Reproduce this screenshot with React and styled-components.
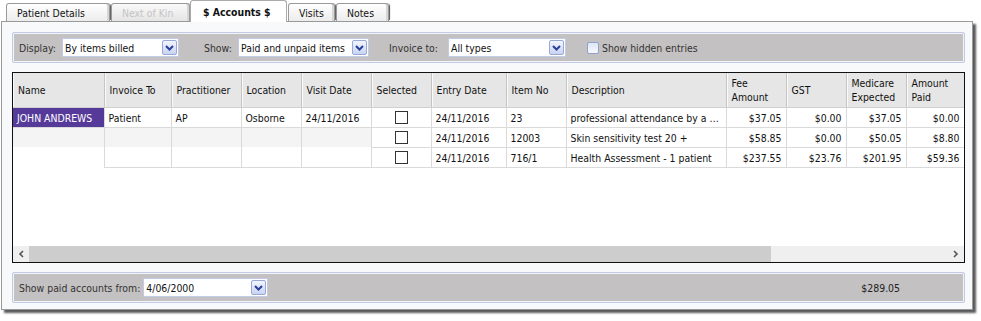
import React from 'react'
import styled, { createGlobalStyle, css } from 'styled-components'

const GlobalStyle = createGlobalStyle`
  html, body {
    margin: 0;
    padding: 0;
    background: #ffffff;
  }
  body {
    font-family: 'DejaVu Sans Condensed', 'DejaVu Sans', Tahoma, sans-serif;
    font-stretch: semi-condensed;
    font-size: 10.4px;
    color: #222;
  }
`

const Page = styled.div`
  width: 981px;
  height: 321px;
  padding: 0 0 0 1px;
  box-sizing: border-box;
`

const TabStrip = styled.div`
  display: flex;
  align-items: flex-end;
  height: 21px;
  padding-left: 5px;
  position: relative;
  z-index: 2;
`

const Tab = styled.div`
  width: ${p => p.$w}px;
  height: 18px;
  box-sizing: border-box;
  padding-left: 10px;
  display: flex;
  align-items: center;
  margin-right: ${p => p.$mr ?? 1}px;
  border: 1px solid #9a9a9a;
  border-bottom: none;
  border-radius: 3px 3px 0 0;
  background: linear-gradient(#ffffff, #ececec);
  box-shadow: inset -2px 0 0 #d6d6d6, 2px 0 1px -1px #555;
  color: #111;
  white-space: nowrap;
  ${p => p.$disabled && css`
    color: #c4c4c4;
    background: linear-gradient(#fafafa, #e4e4e4);
  `}
  ${p => p.$active && css`
    height: 22px;
    margin-bottom: -1px;
    background: #fff;
    font-weight: bold;
    padding-left: 12px;
    box-shadow: none;
    border-color: #aaa;
  `}
`

const Panel = styled.div`
  width: 972px;
  height: 289px;
  box-sizing: border-box;
  border: 1px solid #999;
  background: #f8f9fb;
  box-shadow: 3px 3px 2px rgba(0, 0, 0, 0.65);
  padding: 10px 7px 6px 10px;
  display: flex;
  flex-direction: column;
  gap: 9px;
`

const Bar = styled.div`
  height: 31px;
  box-sizing: border-box;
  border: 1px solid #c2cae6;
  border-radius: 2px;
  background: #c3c1c1;
  box-shadow: inset 0 0 0 1px #f3f4f8;
  display: flex;
  align-items: center;
  padding: 0 6px;
  color: #333;
  flex-shrink: 0;
`

const Label = styled.span`
  width: ${p => (p.$w ? `${p.$w}px` : 'auto')};
  margin-right: 3px;
  white-space: nowrap;
`

const SelectBox = styled.div`
  width: ${p => p.$w}px;
  height: 19px;
  box-sizing: border-box;
  border: 1px solid #c2cae6;
  background: #fff;
  display: flex;
  align-items: center;
  padding-left: 2px;
  margin-right: ${p => p.$mr}px;
  color: #111;
`

const SelectText = styled.span`
  flex: 1;
  white-space: nowrap;
`

const DropButton = styled.span`
  width: 15px;
  height: 15px;
  box-sizing: border-box;
  margin-right: 1px;
  border: 1px solid #98a8d8;
  border-radius: 2px;
  background: linear-gradient(#f2f5fd, #c8d4f2);
  display: flex;
  align-items: center;
  justify-content: center;
`

const HiddenCheck = styled.span`
  width: 12px;
  height: 12px;
  box-sizing: border-box;
  border: 1px solid #8ea2d0;
  border-radius: 2px;
  background: linear-gradient(#dfe6f6, #f6f8fd);
  margin-right: 3px;
`

const Grid = styled.div`
  flex: 1;
  border: 1px solid #111;
  background: #fff;
  display: flex;
  flex-direction: column;
  overflow: hidden;
`

const Table = styled.table`
  border-collapse: collapse;
  table-layout: fixed;
  width: 951px;
  color: #111;
`

const Th = styled.th`
  height: 34px;
  padding: 0 5px;
  text-align: left;
  font-weight: normal;
  line-height: 14px;
  background: #e6e6e6;
  border-right: 1px solid #c4c4c4;
  box-shadow: inset 1px 0 0 #fafafa;
  border-bottom: 1px solid #d0d0d0;
  white-space: normal;
`

const Td = styled.td`
  height: 19px;
  padding: 0 4px;
  border-right: 1px solid #dadada;
  border-bottom: 1px solid #dadada;
  white-space: nowrap;
  overflow: hidden;
  text-overflow: ellipsis;
  text-align: ${p => (p.$right ? 'right' : p.$center ? 'center' : 'left')};
  background: ${p => (p.$selected ? '#563a99' : p.$shade ? '#f4f4f4' : '#fff')};
  color: ${p => (p.$selected ? '#fff' : '#111')};
  ${p => p.$blank && css`border-bottom-color: transparent;`}
`

const Box = styled.span`
  display: inline-block;
  width: 13px;
  height: 13px;
  box-sizing: border-box;
  border: 1px solid #333;
  background: #fff;
  vertical-align: middle;
`

const Filler = styled.div`
  flex: 1;
`

const HScroll = styled.div`
  height: 16px;
  display: flex;
  align-items: center;
  background: #efefef;
`

const Arrow = styled.span`
  width: 16px;
  height: 16px;
  display: flex;
  align-items: center;
  justify-content: center;
`

const Thumb = styled.div`
  width: 742px;
  height: 16px;
  background: #cdcdcd;
`

const Track = styled.div`
  flex: 1;
`

const Total = styled.span`
  margin-left: auto;
  margin-right: 58px;
  color: #222;
`

const Chevron = () => (
  <svg width="9" height="6" viewBox="0 0 9 6">
    <path d="M1 1 L4.5 4.5 L8 1" fill="none" stroke="#2a3f9a" strokeWidth="2" />
  </svg>
)

const Select = ({ w, mr = 0, children }) => (
  <SelectBox $w={w} $mr={mr}>
    <SelectText>{children}</SelectText>
    <DropButton>
      <Chevron />
    </DropButton>
  </SelectBox>
)

const cols = [
  ['Name', 91],
  ['Invoice To', 67],
  ['Practitioner', 70],
  ['Location', 60],
  ['Visit Date', 70],
  ['Selected', 60],
  ['Entry Date', 75],
  ['Item No', 60],
  ['Description', 160],
  ['Fee Amount', 60],
  ['GST', 60],
  ['Medicare Expected', 60],
  ['Amount Paid', 58],
]

const items = [
  ['24/11/2016', '23', 'professional attendance by a medical practitioner', '$37.05', '$0.00', '$37.05', '$0.00'],
  ['24/11/2016', '12003', 'Skin sensitivity test 20 +', '$58.85', '$0.00', '$50.05', '$8.80'],
  ['24/11/2016', '716/1', 'Health Assessment - 1 patient', '$237.55', '$23.76', '$201.95', '$59.36'],
]

export default function App() {
  return (
    <Page>
      <GlobalStyle />
      <TabStrip>
        <Tab $w={104}>Patient Details</Tab>
        <Tab $w={79} $mr={0} $disabled>Next of Kin</Tab>
        <Tab $w={97} $active>$ Accounts $</Tab>
        <Tab $w={47}>Visits</Tab>
        <Tab $w={53}>Notes</Tab>
      </TabStrip>
      <Panel>
        <Bar>
          <Label $w={40}>Display:</Label>
          <Select w={117} mr={25}>By items billed</Select>
          <Label $w={31}>Show:</Label>
          <Select w={131} mr={20}>Paid and unpaid items</Select>
          <Label $w={56}>Invoice to:</Label>
          <Select w={118} mr={21}>All types</Select>
          <HiddenCheck />
          <Label>Show hidden entries</Label>
        </Bar>
        <Grid>
          <Table>
            <colgroup>
              {cols.map(([name, w]) => (
                <col key={name} style={{ width: w }} />
              ))}
            </colgroup>
            <thead>
              <tr>
                {cols.map(([name]) => (
                  <Th key={name}>{name}</Th>
                ))}
              </tr>
            </thead>
            <tbody>
              {items.map((it, i) => {
                const first = i === 0
                const shade = i === 1
                return (
                  <tr key={i}>
                    <Td $selected={first} $shade={shade} $blank={!first}>{first ? 'JOHN ANDREWS' : ''}</Td>
                    <Td $shade={shade} $blank={i === 1}>{first ? 'Patient' : ''}</Td>
                    <Td $shade={shade} $blank={i === 1}>{first ? 'AP' : ''}</Td>
                    <Td $shade={shade} $blank={i === 1}>{first ? 'Osborne' : ''}</Td>
                    <Td $shade={shade} $blank={i === 1}>{first ? '24/11/2016' : ''}</Td>
                    <Td $center><Box /></Td>
                    <Td>{it[0]}</Td>
                    <Td>{it[1]}</Td>
                    <Td>{it[2]}</Td>
                    <Td $right>{it[3]}</Td>
                    <Td $right>{it[4]}</Td>
                    <Td $right>{it[5]}</Td>
                    <Td $right>{it[6]}</Td>
                  </tr>
                )
              })}
            </tbody>
          </Table>
          <Filler />
          <HScroll>
            <Arrow>
              <svg width="6" height="8" viewBox="0 0 6 8">
                <path d="M5 1 L2 4 L5 7" fill="none" stroke="#555" strokeWidth="1.6" />
              </svg>
            </Arrow>
            <Thumb />
            <Track />
            <Arrow>
              <svg width="6" height="8" viewBox="0 0 6 8">
                <path d="M1 1 L4 4 L1 7" fill="none" stroke="#555" strokeWidth="1.6" />
              </svg>
            </Arrow>
          </HScroll>
        </Grid>
        <Bar>
          <Label>Show paid accounts from:</Label>
          <Select w={125}>4/06/2000</Select>
          <Total>$289.05</Total>
        </Bar>
      </Panel>
    </Page>
  )
}
